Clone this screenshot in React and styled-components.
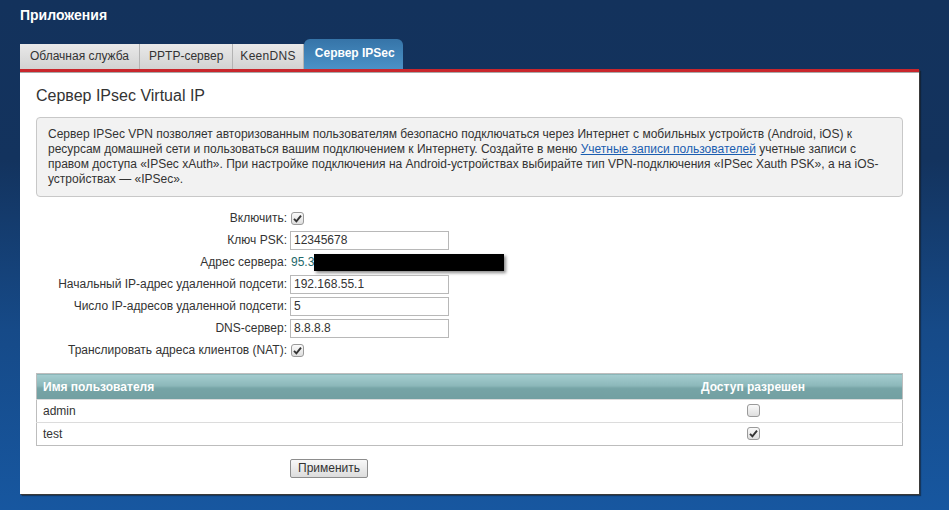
import React from 'react';
import styled, { createGlobalStyle } from 'styled-components';

const GlobalStyle = createGlobalStyle`
  html, body {
    margin: 0;
    padding: 0;
  }
  body {
    font-family: "Liberation Sans", Arial, sans-serif;
    background: linear-gradient(#13325c 0px, #13335e 160px, #164a88 330px, #1757a0 510px);
    min-height: 510px;
  }
`;

const Page = styled.div`
  padding: 0 30px 0 20px;
  min-height: 510px;
  box-sizing: border-box;
`;

const AppTitle = styled.h1`
  margin: 0;
  padding: 7px 0 0;
  font-size: 14px;
  line-height: 16px;
  font-weight: bold;
  color: #fff;
`;

const TabBar = styled.div`
  display: flex;
  align-items: flex-end;
  height: 29px;
  margin-top: 17px;
`;

const Tab = styled.div`
  height: ${p => (p.active ? '30px' : '25px')};
  line-height: ${p => (p.active ? '28px' : '25px')};
  padding: ${p => (p.active ? '0 8px 0 11px' : `0 ${p.pad || 10}px`)};
  font-size: 12px;
  font-weight: ${p => (p.active ? 'bold' : 'normal')};
  color: ${p => (p.active ? '#fff' : '#333')};
  background: ${p => (p.active
    ? 'linear-gradient(#3674a8, #4a92c7)'
    : 'linear-gradient(#e9e9e9, #d2d2d2)')};
  border-right: ${p => (p.active ? 'none' : '1px solid #b3b3b3')};
  border-radius: ${p => (p.active ? '6px 6px 0 0' : '0')};
  box-sizing: border-box;
  white-space: nowrap;
  letter-spacing: ${p => (p.wide ? '0.3px' : '0')};
`;

const Panel = styled.div`
  background: #fff;
  border-top: 3px solid #c9262c;
  box-shadow: inset 0 1px 0 #a9a9a9, 1px 1px 1px #3a3a3a, 2px 2px 1px rgba(0,0,0,0.35);
  padding: 14px 16px 16px;
  color: #333;
`;

const Heading = styled.h2`
  margin: 0;
  font-size: 16px;
  line-height: 20px;
  font-weight: normal;
  color: #333;
`;

const InfoBox = styled.div`
  margin-top: 11px;
  background: #f2f2f2;
  border: 1px solid #c8c8c8;
  border-radius: 4px;
  padding: 9px 12px 9px 11px;
  font-size: 12px;
  line-height: 15px;
  color: #333;
`;

const InfoLink = styled.a`
  color: #1a5db0;
  text-decoration: underline;
`;

const Form = styled.div`
  margin-top: 10px;
  display: grid;
  grid-template-columns: 251px 1fr;
  grid-auto-rows: 22px;
  column-gap: 3px;
  align-items: center;
  font-size: 12px;
`;

const Label = styled.div`
  text-align: right;
  color: #333;
`;

const Value = styled.div`
  display: flex;
  align-items: center;
  padding-left: ${p => (p.accent ? '1px' : '0')};
  color: ${p => (p.accent ? '#23686a' : '#333')};
`;

const TextInput = styled.input`
  width: 159px;
  height: 19px;
  box-sizing: border-box;
  border: 1px solid #b8b8b8;
  padding: 0 3px;
  font-family: "Liberation Sans", Arial, sans-serif;
  font-size: 12px;
  color: #333;
  outline: none;
`;

const Redacted = styled.span`
  display: inline-block;
  width: 190px;
  height: 17px;
  background: #000;
  box-shadow: 2px 2px 3px rgba(0,0,0,0.45);
`;

const Box = styled.span`
  display: inline-flex;
  align-items: center;
  justify-content: center;
  width: 13px;
  height: 13px;
  box-sizing: border-box;
  margin-left: ${p => (p.inset ? '1px' : '0')};
  border: 1px solid #9a9a9a;
  border-radius: 3px;
  background: linear-gradient(#fafafa, #dedede);
`;

const Checkbox = ({ checked, inset }) => (
  <Box inset={inset}>
    {checked && (
      <svg width="9" height="9" viewBox="0 0 9 9">
        <path d="M1 4.8 L3.4 7.3 L8 1.6" fill="none" stroke="#333" strokeWidth="1.9" />
      </svg>
    )}
  </Box>
);

const UsersTable = styled.table`
  margin-top: 12px;
  width: 100%;
  border-collapse: collapse;
  border: 1px solid #bdbdbd;
  font-size: 12px;

  thead th {
    height: 25px;
    padding: 0 6px;
    color: #fff;
    font-weight: bold;
    text-align: left;
    background: linear-gradient(#a5cdd0, #8cb8ba 45%, #76a4a6 55%, #729fa1);
  }
  thead th.center {
    text-align: center;
  }
  tbody td {
    height: 21px;
    padding: 0 6px 1px;
    border-top: 1px solid #dcdcdc;
    color: #333;
  }
  tbody td.center {
    text-align: center;
    width: 286px;
    line-height: 0;
  }
`;

const Actions = styled.div`
  margin-top: 12px;
  padding-left: 254px;
`;

const Button = styled.button`
  height: 19px;
  padding: 0 7px;
  font-family: "Liberation Sans", Arial, sans-serif;
  font-size: 12px;
  color: #333;
  background: linear-gradient(#f8f8f8, #dcdcdc);
  border: 1px solid #8d8d8d;
  border-radius: 2px;
`;

const users = [
  { name: 'admin', allowed: false },
  { name: 'test', allowed: true },
];

export default function App() {
  return (
    <>
      <GlobalStyle />
      <Page>
        <AppTitle>Приложения</AppTitle>
        <TabBar>
          <Tab>Облачная служба</Tab>
          <Tab pad={9}>PPTP-сервер</Tab>
          <Tab wide pad={7}>KeenDNS</Tab>
          <Tab active>Сервер IPSec</Tab>
        </TabBar>
        <Panel>
          <Heading>Сервер IPsec Virtual IP</Heading>
          <InfoBox>
            Сервер IPSec VPN позволяет авторизованным пользователям безопасно подключаться через Интернет с мобильных устройств (Android, iOS) к<br />
            ресурсам домашней сети и пользоваться вашим подключением к Интернету. Создайте в меню <InfoLink href="#">Учетные записи пользователей</InfoLink> учетные записи с<br />
            правом доступа «IPSec xAuth». При настройке подключения на Android-устройствах выбирайте тип VPN-подключения «IPSec Xauth PSK», а на iOS-<br />
            устройствах — «IPSec».
          </InfoBox>
          <Form>
            <Label>Включить:</Label>
            <Value><Checkbox checked inset /></Value>
            <Label>Ключ PSK:</Label>
            <Value><TextInput defaultValue="12345678" /></Value>
            <Label>Адрес сервера:</Label>
            <Value accent>95.3<Redacted /></Value>
            <Label>Начальный IP-адрес удаленной подсети:</Label>
            <Value><TextInput defaultValue="192.168.55.1" /></Value>
            <Label>Число IP-адресов удаленной подсети:</Label>
            <Value><TextInput defaultValue="5" /></Value>
            <Label>DNS-сервер:</Label>
            <Value><TextInput defaultValue="8.8.8.8" /></Value>
            <Label>Транслировать адреса клиентов (NAT):</Label>
            <Value><Checkbox checked inset /></Value>
          </Form>
          <UsersTable>
            <thead>
              <tr>
                <th>Имя пользователя</th>
                <th className="center">Доступ разрешен</th>
              </tr>
            </thead>
            <tbody>
              {users.map(u => (
                <tr key={u.name}>
                  <td>{u.name}</td>
                  <td className="center"><Checkbox checked={u.allowed} /></td>
                </tr>
              ))}
            </tbody>
          </UsersTable>
          <Actions>
            <Button>Применить</Button>
          </Actions>
        </Panel>
      </Page>
    </>
  );
}
